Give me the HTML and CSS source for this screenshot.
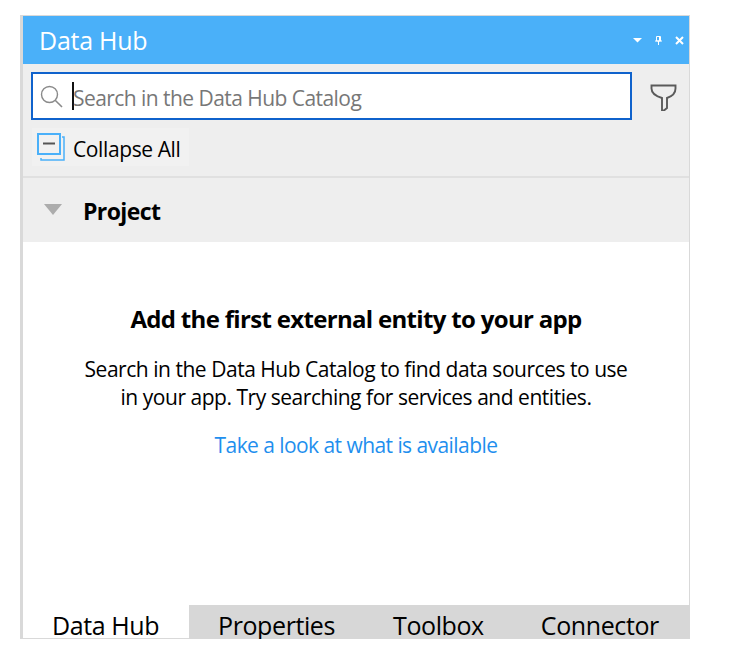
FILE: index.html
```html
<!DOCTYPE html>
<html lang="en">
<head>
<meta charset="utf-8">
<title>Data Hub</title>
<link rel="stylesheet" href="styles.css">
</head>
<body>
<main class="panel">
  <header class="title-bar">
    <h1 class="title">Data Hub</h1>
    <div class="window-controls">
      <svg class="win-icon" width="9" height="5" viewBox="0 0 9 5"><path d="M0 0h9L4.500 4.500z" fill="#fff"/></svg>
      <svg class="win-icon" width="7" height="9" viewBox="0 0 7 9"><path d="M1.500 .5h4v4.500h-4zM0 5h7M3.500 5v4" fill="none" stroke="#fff"/><path d="M4 1h1.500v4H4z" fill="#fff"/></svg>
      <svg class="win-icon" width="9" height="9" viewBox="0 0 9 9"><path d="M1 1l7 7M8 1L1 8" fill="none" stroke="#fff" stroke-width="2"/></svg>
    </div>
  </header>
  <div class="search-row">
    <div class="search-box">
      <svg class="search-icon" width="23" height="23" viewBox="0 0 23 23"><circle cx="9.500" cy="9.500" r="8" fill="none" stroke="#8a8a8a" stroke-width="1.400"/><path d="M15.200 15.200l6.800 6.800" fill="none" stroke="#8a8a8a" stroke-width="1.600"/></svg>
      <span class="caret"></span>
      <span class="placeholder">Search in the Data Hub Catalog</span>
    </div>
    <svg class="filter-icon" width="27" height="27" viewBox="0 0 27 27"><path d="M1.500 1.500h24v3c0 5-4 8-8.500 9.500v10l-3 2.500h-2V14C7 12.500 1.500 10 1.500 4.500z" fill="none" stroke="#5a5a5a" stroke-width="1.900"/></svg>
  </div>
  <div class="toolbar">
    <button class="collapse-btn" type="button">
      <svg class="collapse-icon" width="28" height="28" viewBox="0 0 28 28"><path d="M1 1h22v20H1z" fill="none" stroke="#4ab0f9" stroke-width="2"/><path d="M25 4h2v23H4v-2" fill="none" stroke="#4ab0f9" stroke-width="1.500"/><path d="M6 10.500h12" stroke="#555" stroke-width="2"/></svg>
      <span class="collapse-label">Collapse All</span>
    </button>
  </div>
  <section class="group-header">
    <span class="triangle"></span>
    <h2 class="group-title">Project</h2>
  </section>
  <section class="empty">
    <h3 class="empty-title">Add the first external entity to your app</h3>
    <p class="empty-text">Search in the Data Hub Catalog to find data sources to use<br>in your app. Try searching for services and entities.</p>
    <a class="empty-link" href="#">Take a look at what is available</a>
  </section>
  <nav class="tabs">
    <span class="tab tab-active tab-hub">Data Hub</span>
    <div class="tab-rest">
      <span class="tab tab-props">Properties</span>
      <span class="tab tab-toolbox">Toolbox</span>
      <span class="tab tab-conn">Connector</span>
    </div>
  </nav>
</main>
</body>
</html>
```
FILE: styles.css
```css
* { box-sizing: border-box; }
html, body { margin: 0; padding: 0; background: #fff; }
body { padding: 15px 0 0 20px; height: 651px; overflow: hidden; font-family: "Open Sans", "Noto Sans", sans-serif; color: #000; }
.panel { width: 670px; height: 624px; display: flex; flex-direction: column; border: 1px solid #d9d9d9; border-left-width: 3px; border-bottom: 0; background: #fff; }
.title-bar { height: 48px; flex: none; background: #4ab0f9; display: flex; align-items: center; justify-content: space-between; padding: 0 5px 0 16px; }
.title { margin: 0; font-size: 25px; font-weight: 400; color: #fff; letter-spacing: -.25px; }
.window-controls { display: flex; align-items: center; gap: 13px; }
.win-icon { display: block; }
.search-row { height: 56px; flex: none; background: #eee; display: flex; align-items: flex-start; padding: 8px 0 0 8px; }
.search-box { width: 601px; height: 48px; background: #fff; border: 2px solid #0f62cc; display: flex; align-items: center; padding-left: 7px; }
.search-icon { flex: none; }
.caret { width: 2px; height: 28px; background: #111; flex: none; margin-left: 9px; }
.placeholder { font-size: 21px; color: #777; margin-left: -1px; padding-top: 4px; letter-spacing: -.55px; }
.filter-icon { margin: 12px 0 0 18px; }
.toolbar { height: 58px; flex: none; background: #eee; border-bottom: 2px solid #e0e0e0; padding: 8px 0 0 9px; }
.collapse-btn { width: 157px; height: 38px; border: 0; background: #f1f1f1; display: flex; align-items: center; padding: 0 0 0 5px; font: inherit; font-size: 21px; color: #000; letter-spacing: -.39px; }
.collapse-icon { flex: none; margin-right: 8px; }
.collapse-label { padding-top: 4px; }
.group-header { height: 64px; flex: none; background: #eee; display: flex; align-items: center; padding-left: 21px; }
.triangle { width: 0; height: 0; border-left: 9px solid transparent; border-right: 9px solid transparent; border-top: 11px solid #acacac; margin-top: -1px; }
.group-title { margin: 0 0 0 21px; padding-top: 1px; font-size: 23px; font-weight: 700; letter-spacing: -.6px; }
.empty { flex: 1; display: flex; flex-direction: column; align-items: center; padding-top: 61px; text-align: center; }
.empty-title { margin: 0; font-size: 24px; font-weight: 700; letter-spacing: -.68px; line-height: 32px; }
.empty-text { margin: 20px 0 0; font-size: 21px; line-height: 28px; letter-spacing: -.47px; }
.empty-link { margin-top: 20px; font-size: 21px; line-height: 28px; color: #1f8fee; text-decoration: none; letter-spacing: -.56px; }
.tabs { height: 34px; flex: none; display: flex; align-items: flex-start; overflow: hidden; margin-right: -1px; }
.tab { font-size: 25px; line-height: 40px; letter-spacing: -.4px; white-space: nowrap; }
.tab-hub { width: 166px; padding-left: 29px; height: 34px; border-bottom: 1px solid #d9d9d9; }
.tab-rest { flex: 1; height: 34px; background: #d7d7d7; display: flex; padding-left: 29px; }
.tab-toolbox { margin-left: 58px; }
.tab-conn { margin-left: 57px; }
```
